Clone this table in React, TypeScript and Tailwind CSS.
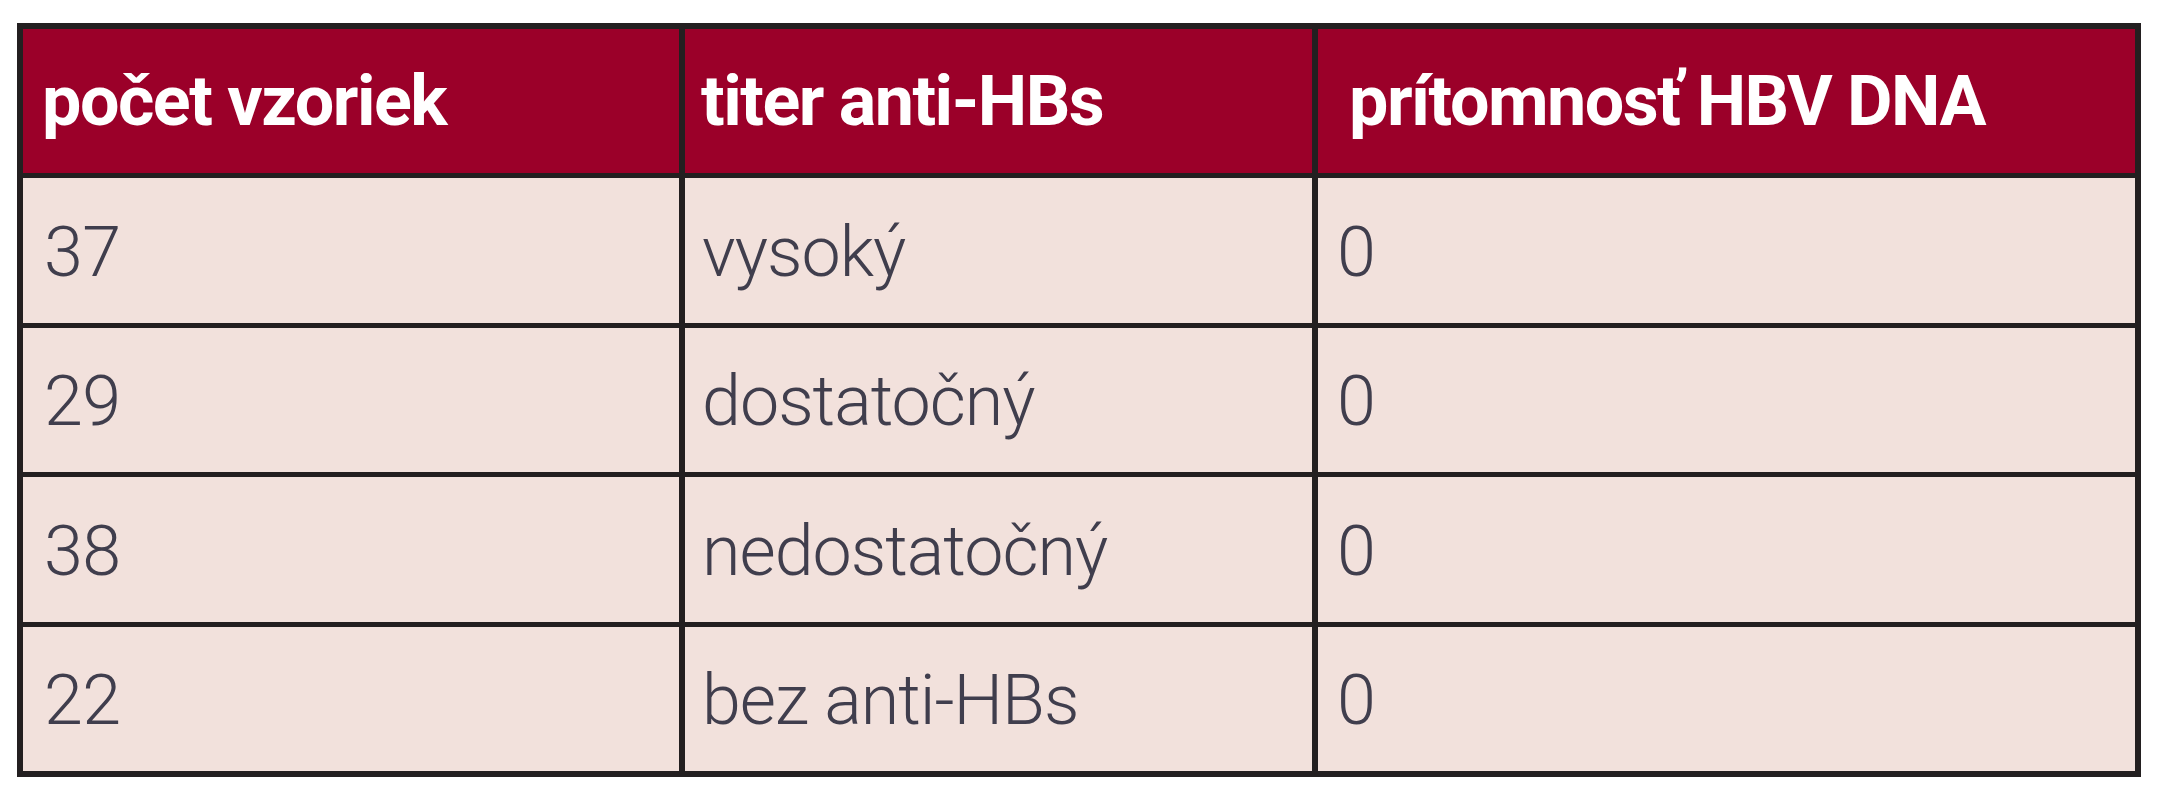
import React from "react";

const rows: [string, string, string][] = [
  ["37", "vysoký", "0"],
  ["29", "dostatočný", "0"],
  ["38", "nedostatočný", "0"],
  ["22", "bez anti-HBs", "0"],
];

const rowHeights = ["h-[145px]", "h-[144px]", "h-[145px]", "h-[144px]"];

export default function App() {
  return (
    <div className="w-[2164px] h-[800px] bg-white pt-[23px] pl-[17px]">
      <div
        className="w-[2124px] border-[6px] border-[#231f20] bg-[#231f20] grid grid-cols-[656px_627px_817px] gap-x-[6px] gap-y-[5px]"
        style={{ fontFamily: "Roboto, 'Liberation Sans', sans-serif" }}
      >
        <div className="h-[144px] bg-[#9b0029] flex items-center pl-[19px] text-white font-bold text-[70px] tracking-[-1.5px]">
          počet vzoriek
        </div>
        <div className="h-[144px] bg-[#9b0029] flex items-center pl-[16px] text-white font-bold text-[70px] tracking-[-1.5px]">
          titer anti-HBs
        </div>
        <div className="h-[144px] bg-[#9b0029] flex items-center pl-[31px] text-white font-bold text-[70px] tracking-[-1.5px]">
          prítomnosť HBV DNA
        </div>
        {rows.map((r, i) => (
          <React.Fragment key={i}>
            <div className={`${rowHeights[i]} bg-[#f2e1dc] flex items-center pl-[21px] pt-[3px] text-[#403e4d] font-light text-[70px] tracking-[-0.5px]`}>
              {r[0]}
            </div>
            <div className={`${rowHeights[i]} bg-[#f2e1dc] flex items-center pl-[17px] pt-[3px] text-[#403e4d] font-light text-[70px] tracking-[-1px]`}>
              {r[1]}
            </div>
            <div className={`${rowHeights[i]} bg-[#f2e1dc] flex items-center pl-[19px] pt-[3px] text-[#403e4d] font-light text-[70px] tracking-[-1px]`}>
              {r[2]}
            </div>
          </React.Fragment>
        ))}
      </div>
    </div>
  );
}
